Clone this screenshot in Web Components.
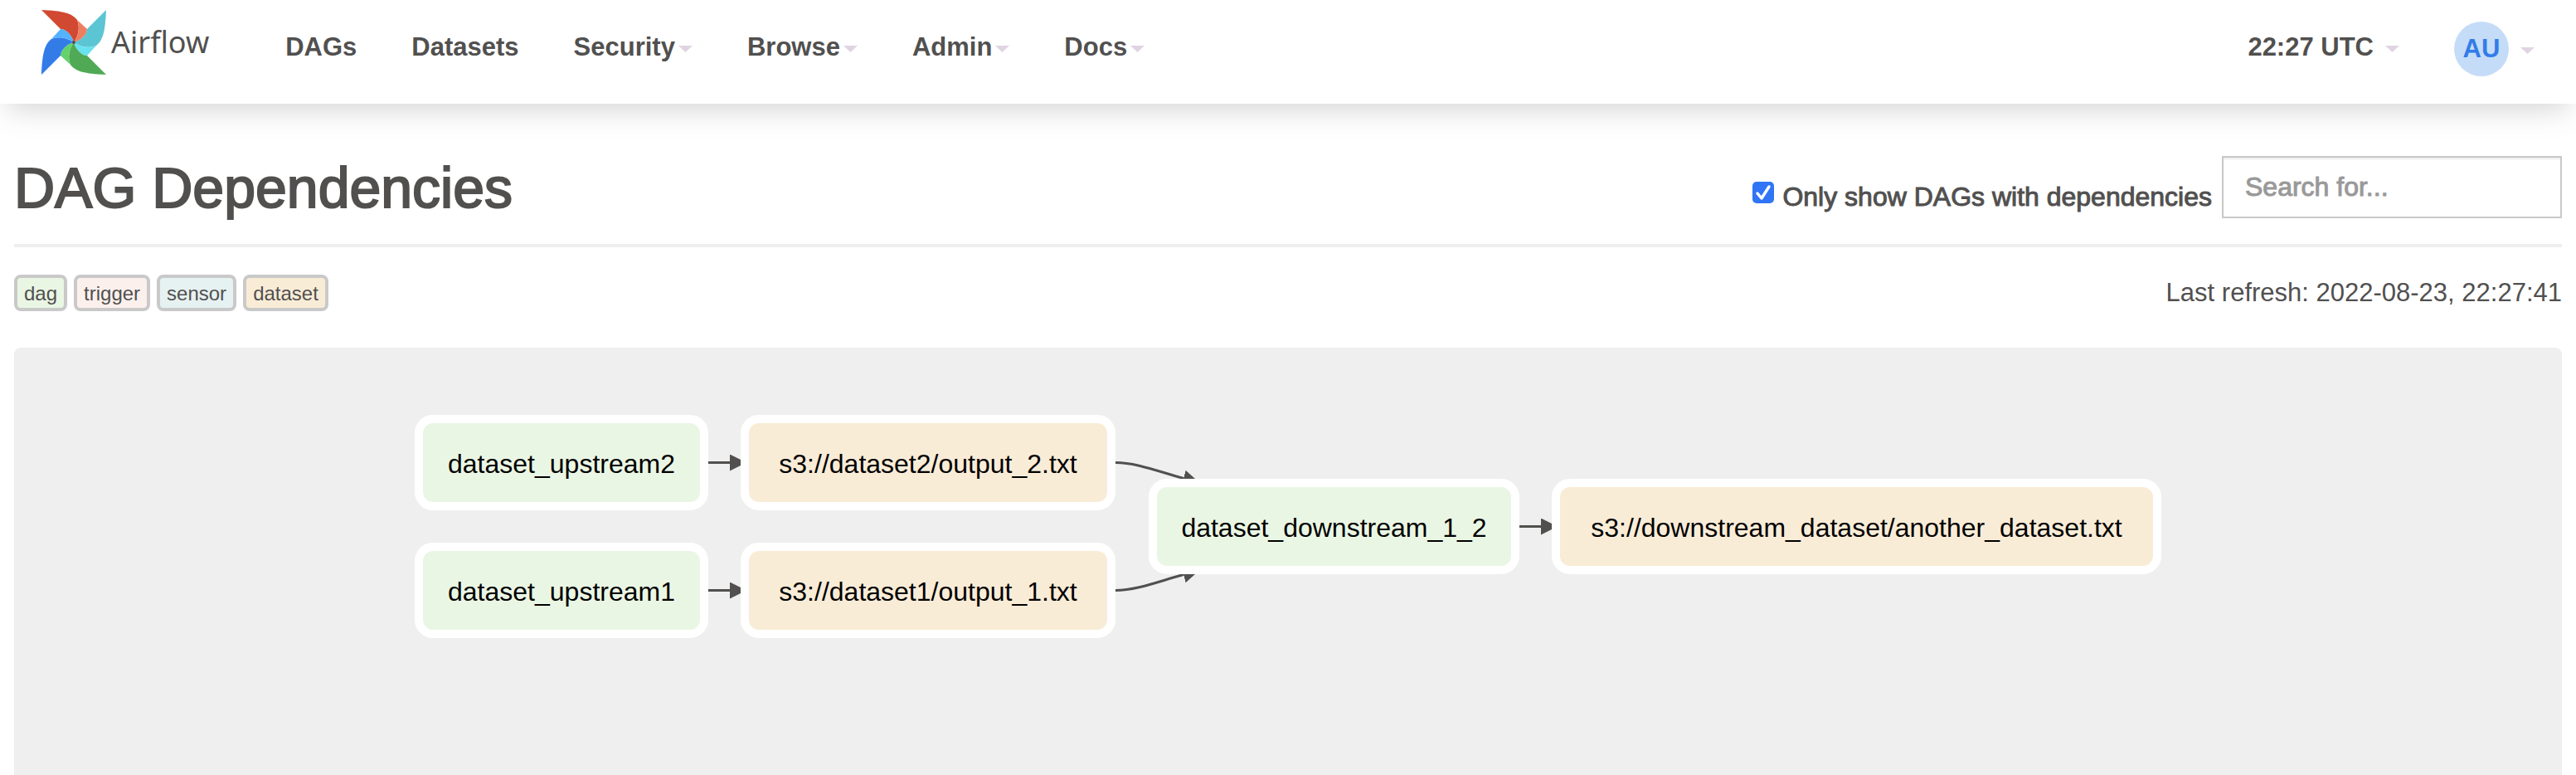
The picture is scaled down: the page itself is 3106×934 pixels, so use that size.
<!DOCTYPE html>
<html lang="en">
<head>
<meta charset="utf-8">
<title>DAG Dependencies - Airflow</title>
<style>
html, body { margin: 0; height: 100%; }
body { background: #fff; color: #51504f; font: 32px/46px "Liberation Sans", Arial, sans-serif; overflow: hidden; }
</style>
</head>
<body>
<airflow-app></airflow-app>
<script>
const define = (name, html) => {
  const template = document.createElement('template');
  template.innerHTML = html;
  customElements.define(name, class extends HTMLElement {
    constructor() {
      super();
      this.attachShadow({ mode: 'open' }).append(template.content.cloneNode(true));
    }
  });
};

// One pinwheel blade: the broad face and its folded tip, turned about the hub.
const blade = (angle, face, fold) => `<g transform="rotate(${angle} 39 39)">
<path fill="${face}" d="M0 0 23 23C30 23 37 31 39 39C44 32 47 22 43 12C37 4 26 1 0 0Z"/>
<path fill="${fold}" d="M39 39C47 37 55 30 55 23L43 12C47 22 44 32 39 39Z"/></g>`;

define('airflow-logo', `
<style>
:host { display: block; }
a { display: flex; align-items: center; gap: 6px; color: inherit; text-decoration: none; font: 36px/50px "Noto Sans", sans-serif; }
svg { display: block; width: 78px; height: 78px; }
</style>
<a href="#"><svg viewBox="0 0 78 78" aria-hidden="true">
${blade(0, '#d14931', '#ee7e60')}
${blade(90, '#5bc5d3', '#68e1f0')}
${blade(180, '#50a955', '#63d26b')}
${blade(270, '#337ce8', '#53b3ff')}
<circle cx="39" cy="39" r="2" fill="#51504f"/></svg><span>Airflow</span></a>`);

define('nav-item', `
<style>
:host { display: block; font-size: 31px; font-weight: 700; }
a { display: flex; align-items: center; color: inherit; text-decoration: none; }
svg { display: none; width: 17px; height: 8px; margin: 4px 0 0 4px; fill: #e0d4e2; }
:host([menu]) svg { display: block; }
:host([spaced]) svg { margin-left: 14px; }
</style>
<a href="#"><slot></slot><svg viewBox="0 0 16 8" preserveAspectRatio="none" aria-hidden="true"><path d="M0 0H16L8 8Z"/></svg></a>`);

define('user-avatar', `
<style>
:host { display: grid; place-items: center; width: 66px; height: 66px; border-radius: 50%; background: #c5dcf8; color: #337ce8; }
</style><slot></slot>`);

define('top-bar', `
<style>
:host { display: block; height: 125px; background: #fff; box-shadow: 0 16px 32px -10px rgba(81,80,79,.25); position: relative; }
header { display: flex; align-items: flex-start; padding: 0 50px; }
airflow-logo { margin: 12px 92px 0 0; }
nav { display: flex; gap: 66px; padding-top: 34px; }
.right { display: flex; margin-left: auto; gap: 66px; }
.right nav-item:first-child { padding-top: 34px; }
.right nav-item:last-child { padding-top: 26px; }
</style>
<header>
<airflow-logo></airflow-logo>
<nav>
<nav-item>DAGs</nav-item><nav-item>Datasets</nav-item><nav-item menu>Security</nav-item><nav-item menu>Browse</nav-item><nav-item menu>Admin</nav-item><nav-item menu>Docs</nav-item>
</nav>
<div class="right"><nav-item menu spaced>22:27 UTC</nav-item><nav-item menu spaced><user-avatar>AU</user-avatar></nav-item></div>
</header>`);

define('page-heading', `
<style>
:host { display: flex; justify-content: space-between; align-items: flex-start; border-bottom: 4px solid #eee; height: 106px; }
h1 { margin: 0; font-size: 68px; line-height: 76px; font-weight: 400; -webkit-text-stroke: 2px currentColor; }
form { display: flex; align-items: flex-start; }
label { display: flex; align-items: flex-start; gap: 10px; margin-right: 12px; padding-top: 26px; -webkit-text-stroke: 1px currentColor; }
input[type=checkbox] { width: 26px; height: 26px; margin: 5px 0 0; appearance: none; border-radius: 5px; background: #2f75f6 url('data:image/svg+xml,<svg xmlns="http://www.w3.org/2000/svg" viewBox="0 0 26 26"><path d="M6 14L11 20L20 6" fill="none" stroke="white" stroke-width="3.5" stroke-linecap="round" stroke-linejoin="round"/></svg>'); }
input[type=search] { appearance: none; box-sizing: border-box; width: 410px; height: 75px; margin: 0; padding: 0 26px; border: 2px solid #c9c9c9; border-radius: 0; background: #fff; box-shadow: inset 0 2px 2px rgba(0,0,0,.08); color: inherit; font: inherit; outline: 0; }
input::placeholder { color: #999; opacity: 1; -webkit-text-stroke: 1px #999; }
</style>
<h1>DAG Dependencies</h1>
<form>
<label for="only"><input type="checkbox" id="only" checked>Only show DAGs with dependencies</label>
<input type="search" aria-label="Search for DAG" placeholder="Search for...">
</form>`);

define('legend-tag', `
<style>
:host { display: block; box-sizing: border-box; height: 44px; padding: 0 8px; border: 4px solid #c9c9c9; border-radius: 8px; font-size: 24px; line-height: 38px; }
:host([kind=dag]) { background: #eaf6e4; }
:host([kind=trigger]) { background: #fcf0ed; }
:host([kind=sensor]) { background: #e6f1f2; }
:host([kind=dataset]) { background: #f9ecd7; }
</style><slot></slot>`);

define('graph-legend', `
<style>
:host { display: flex; justify-content: space-between; align-items: center; padding: 33px 0 44px; height: 44px; }
.tags { display: flex; gap: 8px; }
time { font-size: 31px; }
</style>
<div class="tags"><legend-tag kind="dag">dag</legend-tag><legend-tag kind="trigger">trigger</legend-tag><legend-tag kind="sensor">sensor</legend-tag><legend-tag kind="dataset">dataset</legend-tag></div>
<time>Last refresh: 2022-08-23, 22:27:41</time>`);

define('graph-node', `
<style>
:host { display: grid; place-items: center; box-sizing: border-box; height: 115px; padding-top: 2px; border: 10px solid #fff; border-radius: 22px; color: #000; white-space: nowrap; }
:host([kind=dag]) { background: #eaf6e4; }
:host([kind=dataset]) { background: #f9ecd7; }
</style><slot></slot>`);

define('dependency-graph', `
<style>
:host { display: block; flex: 1; background: #efefef; border-radius: 8px 8px 0 0; padding-top: 81px; }
.canvas { position: relative; width: 2106px; height: 269px; margin: 0 auto; }
svg { position: absolute; inset: 0; width: 100%; height: 100%; }
.edge { fill: none; stroke: #51504f; stroke-width: 3; }
marker { fill: #51504f; }
graph-node { position: absolute; }
.u { left: 0; width: 354px; }
.o { left: 393px; width: 452px; }
.d { left: 885px; width: 447px; }
.a { left: 1371px; width: 735px; }
.r1 { top: 0; } .r2 { top: 154px; } .mid { top: 77px; }
</style>
<div class="canvas">
<svg viewBox="0 0 2106 269" aria-hidden="true">
<defs><marker id="arrow" viewBox="0 0 20 20" refX="0" refY="10" markerWidth="20" markerHeight="20" markerUnits="userSpaceOnUse" orient="auto"><path d="M0 0 20 10 0 20Z"/></marker></defs>
<path class="edge" marker-end="url(#arrow)" d="M354 57.5H380"/>
<path class="edge" marker-end="url(#arrow)" d="M354 211.5H380"/>
<path class="edge" marker-end="url(#arrow)" d="M845 57.5C870 57.5 896 68 927 76.5"/>
<path class="edge" marker-end="url(#arrow)" d="M845 211.5C870 211.5 896 201 927 192.5"/>
<path class="edge" marker-end="url(#arrow)" d="M1332 134.5H1358"/>
</svg>
<graph-node class="u r1" kind="dag">dataset_upstream2</graph-node>
<graph-node class="u r2" kind="dag">dataset_upstream1</graph-node>
<graph-node class="o r1" kind="dataset">s3://dataset2/output_2.txt</graph-node>
<graph-node class="o r2" kind="dataset">s3://dataset1/output_1.txt</graph-node>
<graph-node class="d mid" kind="dag">dataset_downstream_1_2</graph-node>
<graph-node class="a mid" kind="dataset">s3://downstream_dataset/another_dataset.txt</graph-node>
</div>`);

define('airflow-app', `
<style>
:host { display: flex; flex-direction: column; min-height: 100%; }
main { display: flex; flex-direction: column; flex: 1; padding: 63px 17px 0; }
</style>
<top-bar></top-bar>
<main><page-heading></page-heading><graph-legend></graph-legend><dependency-graph></dependency-graph></main>`);
</script>
</body>
</html>
